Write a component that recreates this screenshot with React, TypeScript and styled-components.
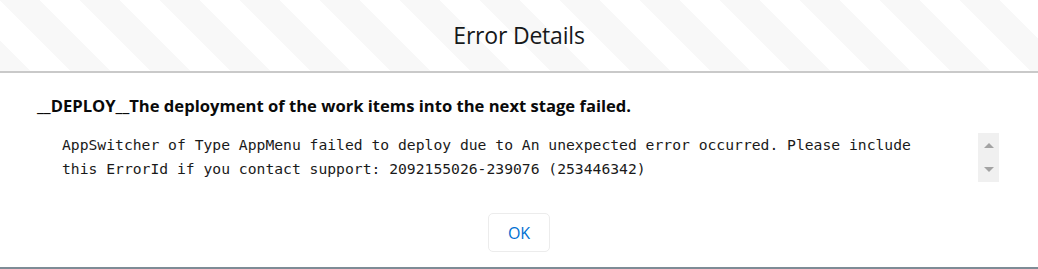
import React from "react";
import styled, { createGlobalStyle } from "styled-components";

const GlobalStyle = createGlobalStyle`
  html, body {
    margin: 0;
    padding: 0;
  }
  body {
    background: #7e8c96;
    font-family: "Open Sans", "Noto Sans", sans-serif;
  }
`;

const Modal = styled.div`
  width: 1038px;
  height: 267px;
  background: #ffffff;
  display: flex;
  flex-direction: column;
`;

const Header = styled.header`
  height: 73px;
  flex-shrink: 0;
  box-sizing: border-box;
  padding-bottom: 2px;
  border-bottom: 2px solid #c9c9c9;
  display: flex;
  align-items: center;
  justify-content: center;
  background-color: #ffffff;
  background-image: linear-gradient(
    45deg,
    #f8f8f8 25%,
    transparent 25%,
    transparent 50%,
    #f8f8f8 50%,
    #f8f8f8 75%,
    transparent 75%,
    transparent
  );
  background-size: 80px 80px;
`;

const Title = styled.h2`
  margin: 0;
  font-family: "Open Sans", "Noto Sans", sans-serif;
  font-weight: 400;
  font-size: 23px;
  color: #16181a;
  letter-spacing: -0.2px;
`;

const Body = styled.div`
  padding: 21px 39px 0 37px;
`;

const Heading = styled.h3`
  margin: 0;
  font-family: "Open Sans", "Noto Sans", sans-serif;
  font-weight: 700;
  font-size: 16.6px;
  line-height: 24px;
  color: #0a0a0a;
`;

const MessageRow = styled.div`
  display: flex;
  margin: 15px 0 0 13px;
  height: 49px;
`;

const MessageText = styled.pre`
  flex: 1;
  margin: 0;
  padding: 0 0 0 12px;
  font-family: "DejaVu Sans Mono", "Liberation Mono", monospace;
  font-size: 14.7px;
  line-height: 24px;
  color: #1a1a1a;
  white-space: pre-wrap;
`;

const ScrollTrack = styled.div`
  width: 21px;
  background: #f0f0f0;
  display: flex;
  flex-direction: column;
  justify-content: space-between;
  align-items: center;
  padding: 10px 0;
  box-sizing: border-box;
`;

const Arrow = styled.span<{ $down?: boolean }>`
  width: 0;
  height: 0;
  border-left: 5px solid transparent;
  border-right: 5px solid transparent;
  ${(p) =>
    p.$down
      ? "border-top: 5px solid #a3a3a3;"
      : "border-bottom: 5px solid #a3a3a3;"}
`;

const Footer = styled.div`
  flex: 1;
  display: flex;
  justify-content: center;
  align-items: flex-start;
  padding-top: 31px;
`;

const OkButton = styled.button`
  width: 62px;
  height: 39px;
  background: #ffffff;
  border: 1px solid #ececec;
  border-radius: 5px;
  color: #0070d2;
  font-family: "Open Sans", "Noto Sans", sans-serif;
  font-size: 16px;
  cursor: pointer;
`;

export default function App() {
  return (
    <>
      <GlobalStyle />
      <Modal>
        <Header>
          <Title>Error Details</Title>
        </Header>
        <Body>
          <Heading>__DEPLOY__The deployment of the work items into the next stage failed.</Heading>
          <MessageRow>
            <MessageText>
              {"AppSwitcher of Type AppMenu failed to deploy due to An unexpected error occurred. Please include\nthis ErrorId if you contact support: 2092155026-239076 (253446342)"}
            </MessageText>
            <ScrollTrack>
              <Arrow />
              <Arrow $down />
            </ScrollTrack>
          </MessageRow>
        </Body>
        <Footer>
          <OkButton>OK</OkButton>
        </Footer>
      </Modal>
    </>
  );
}
